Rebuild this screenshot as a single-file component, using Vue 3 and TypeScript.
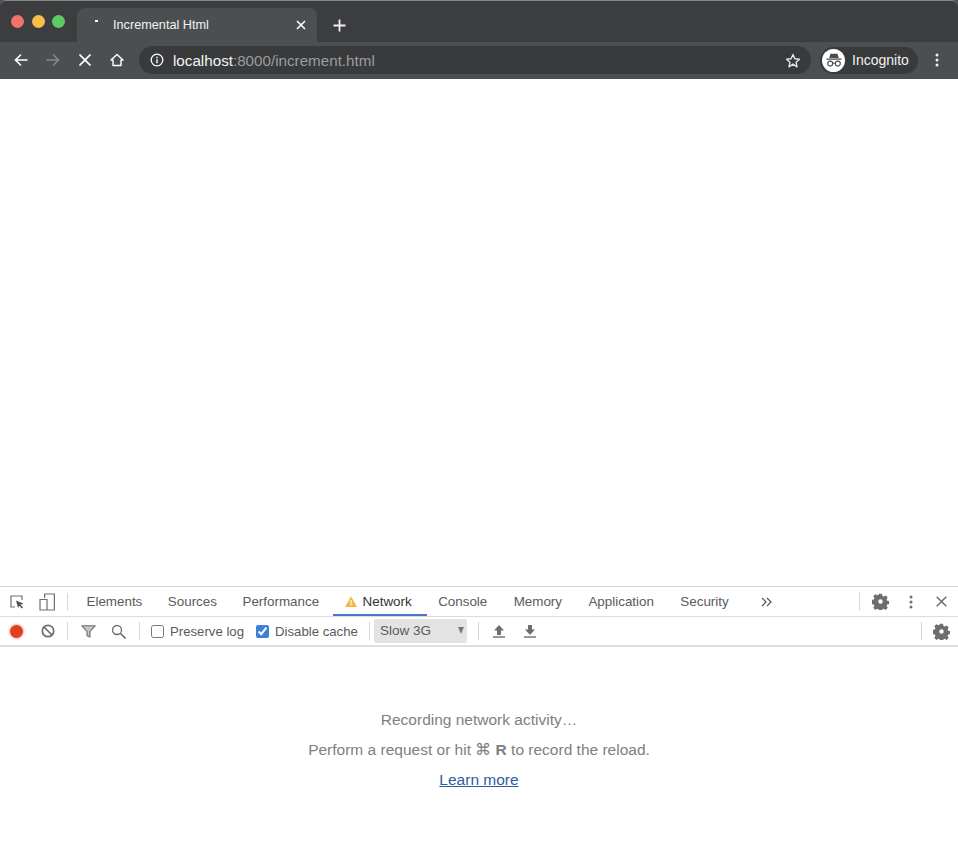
<script setup lang="ts">
const panels: string[] = ['Elements', 'Sources', 'Performance', 'Network', 'Console', 'Memory', 'Application', 'Security']
const gear = 'M6.600 .8h2.800l.4 2 1.300.6 1.700-1.100 2 2-1.100 1.700.6 1.300 2 .4v2.800l-2 .4-.6 1.300 1.100 1.700-2 2-1.700-1.100-1.300.6-.4 2H6.600l-.4-2-1.300-.6-1.700 1.100-2-2 1.100-1.700-.6-1.300-2-.4V6.500l2-.4.6-1.300-1.100-1.700 2-2 1.700 1.100 1.300-.6zM8 5.800a2.100 2.100 0 1 0 0 4.200 2.100 2.100 0 0 0 0-4.200z'
</script>

<template>
  <div class="window">
    <header class="chrome">
      <div class="tabstrip">
        <div class="lights">
          <span class="light red"></span>
          <span class="light yellow"></span>
          <span class="light green"></span>
        </div>
        <div class="tab">
          <span class="spinner"></span>
          <span class="tab-title">Incremental Html</span>
          <svg class="tab-close" width="10" height="10" viewBox="0 0 10 10"><path d="M1 1l8 8M9 1l-8 8" stroke="#fff" stroke-width="1.600" /></svg>
        </div>
        <svg class="new-tab" width="13" height="13" viewBox="0 0 13 13"><path d="M6.500 .5v12M.5 6.500h12" stroke="#f1f1f1" stroke-width="1.800" /></svg>
      </div>
      <div class="toolbar">
        <svg class="nav back" width="14" height="14" viewBox="0 0 14 14"><path d="M13.500 7H1.500M7 1.500L1.500 7 7 12.500" fill="none" stroke="#fff" stroke-width="1.600" /></svg>
        <svg class="nav forward" width="14" height="14" viewBox="0 0 14 14"><path d="M.5 7h12M7 1.500L12.500 7 7 12.500" fill="none" stroke="#85888b" stroke-width="1.600" /></svg>
        <svg class="nav stop" width="12" height="12" viewBox="0 0 12 12"><path d="M.5.5l11 11M11.500.5l-11 11" stroke="#fff" stroke-width="1.700" /></svg>
        <svg class="nav home" width="14" height="14" viewBox="0 0 14 14"><path d="M1 7l6-5.500L13 7h-2v5.500H3V7z" fill="none" stroke="#fff" stroke-width="1.400" stroke-linejoin="round" /></svg>
        <div class="omnibox">
          <svg class="info" width="14" height="14" viewBox="0 0 14 14"><circle cx="7" cy="7" r="5.800" fill="none" stroke="#fff" stroke-width="1.300" /><path d="M7 6.200v4M7 3.800v1.400" stroke="#fff" stroke-width="1.400" /></svg>
          <span class="url"><span class="host">localhost</span>:8000/increment.html</span>
          <svg class="star" width="16" height="15" viewBox="0 0 16 15"><path d="M8 1.500l1.900 4.200 4.600.5-3.400 3.100.9 4.500L8 11.100l-4 2.700.9-4.500-3.400-3.100 4.600-.5z" fill="none" stroke="#e4e5e6" stroke-width="1.400" stroke-linejoin="round" /></svg>
        </div>
        <div class="profile">
          <span class="avatar">
            <svg width="18" height="14" viewBox="0 0 18 14"><path d="M5.500 .8h7L13.800 5H4.200zM1.500 5.500h15v1.200h-15z" fill="#4a4c4f" /><circle cx="5.200" cy="10.600" r="2.500" fill="none" stroke="#4a4c4f" stroke-width="1.100" /><circle cx="12.800" cy="10.600" r="2.500" fill="none" stroke="#4a4c4f" stroke-width="1.100" /><path d="M7.700 10.200h2.600" stroke="#4a4c4f" stroke-width="1" /></svg>
          </span>
          <span class="profile-name">Incognito</span>
        </div>
        <svg class="menu" width="4" height="14" viewBox="0 0 4 14"><circle cx="2" cy="2" r="1.500" fill="#f1f1f1" /><circle cx="2" cy="7" r="1.500" fill="#f1f1f1" /><circle cx="2" cy="12" r="1.500" fill="#f1f1f1" /></svg>
      </div>
    </header>

    <main class="page"></main>

    <section class="devtools">
      <div class="dt-tabs">
        <svg class="dt-inspect" width="16" height="16" viewBox="0 0 16 16"><path d="M6 13H2V2h11v4" fill="none" stroke="#6e6e6e" stroke-width="1.200" /><path d="M7 6.500l7.500 3-3 1.200 2.500 2.800-1.200 1-2.400-2.800L9 14z" fill="#555" /></svg>
        <svg class="dt-device" width="16" height="18" viewBox="0 0 16 18"><path d="M5.600 5V1h9.800v16H1V6.500h7V17" fill="none" stroke="#6e6e6e" stroke-width="1.200" /></svg>
        <span class="dt-sep first"></span>
        <div class="panel-tabs">
          <span v-for="p in panels" :key="p" class="panel-tab" :class="{ active: p === 'Network' }"><svg v-if="p === 'Network'" class="warn" width="12" height="11" viewBox="0 0 12 11"><path d="M6 .3L12 11H0z" fill="#f0bb45" /><path d="M6 4v3.500M6 8.300v1.300" stroke="#fff" stroke-width="1.200" /></svg>{{ p }}</span>
          <svg class="more" width="11" height="10" viewBox="0 0 11 10"><path d="M1 1l4 4-4 4M6 1l4 4-4 4" fill="none" stroke="#555" stroke-width="1.200" /></svg>
        </div>
        <span class="dt-sep tabs-end"></span>
        <svg class="dt-gear" width="17" height="17" viewBox="0 0 16 16"><path :d="gear" fill="#6e6e6e" fill-rule="evenodd" /></svg>
        <svg class="dt-kebab" width="4" height="14" viewBox="0 0 4 14"><circle cx="2" cy="2" r="1.500" fill="#6e6e6e" /><circle cx="2" cy="7" r="1.500" fill="#6e6e6e" /><circle cx="2" cy="12" r="1.500" fill="#6e6e6e" /></svg>
        <svg class="dt-close" width="11" height="11" viewBox="0 0 11 11"><path d="M.7.7l9.600 9.600M10.300.7L.7 10.300" stroke="#6e6e6e" stroke-width="1.500" /></svg>
      </div>

      <div class="dt-controls">
        <span class="record"></span>
        <svg class="clear" width="14" height="14" viewBox="0 0 14 14"><circle cx="7" cy="7" r="5.700" fill="none" stroke="#6e6e6e" stroke-width="1.700" /><path d="M3 3l8 8" stroke="#6e6e6e" stroke-width="1.700" /></svg>
        <span class="dt-sep s1"></span>
        <svg class="filter" width="15" height="13" viewBox="0 0 15 13"><path d="M.8 .8h13.400L9 6.500V12l-3-1.200V6.500z" fill="#c4c4c4" stroke="#6e6e6e" stroke-width="1.100" stroke-linejoin="round" /></svg>
        <svg class="search" width="15" height="15" viewBox="0 0 15 15"><circle cx="6" cy="6" r="4.500" fill="none" stroke="#6e6e6e" stroke-width="1.300" /><path d="M9.500 9.500l5 5" stroke="#6e6e6e" stroke-width="1.700" /></svg>
        <span class="dt-sep s2"></span>
        <label class="check preserve"><input type="checkbox" />Preserve log</label>
        <label class="check disable"><input type="checkbox" checked />Disable cache</label>
        <span class="dt-sep s3"></span>
        <span class="throttle">Slow 3G<i class="caret"></i></span>
        <span class="dt-sep s4"></span>
        <svg class="upload" width="12" height="13" viewBox="0 0 12 13"><path d="M6 0l5 5.500H8V10H4V5.500H1z" fill="#6e6e6e" /><path d="M0 12h12" stroke="#6e6e6e" stroke-width="1.400" /></svg>
        <svg class="download" width="12" height="13" viewBox="0 0 12 13"><path d="M6 10L1 4.500h3V0h4v4.500h3z" fill="#6e6e6e" /><path d="M0 12h12" stroke="#6e6e6e" stroke-width="1.400" /></svg>
        <span class="dt-sep s5"></span>
        <svg class="dt-gear2" width="17" height="17" viewBox="0 0 16 16"><path :d="gear" fill="#6e6e6e" fill-rule="evenodd" /></svg>
      </div>

      <div class="empty">
        <p>Recording network activity…</p>
        <p>Perform a request or hit ⌘ <b>R</b> to record the reload.</p>
        <a class="learn" href="#" @click.prevent>Learn more</a>
      </div>
    </section>
  </div>
</template>

<style>
html, body { margin: 0; background: #fff; }
</style>

<style scoped>
.window {
  width: 958px;
  height: 850px;
  display: flex;
  flex-direction: column;
  overflow: hidden;
  font-family: "Liberation Sans", Arial, sans-serif;
}
.chrome { flex: none; background: #4c4f52; }
.tabstrip {
  height: 41px;
  border-top: 1px solid #85888b;
  background: #3b3d3f;
  border-radius: 6px 6px 0 0;
  display: flex;
  align-items: flex-end;
  box-sizing: content-box;
}
.lights { display: flex; gap: 7.500px; margin: 0 13px 14px 11px; }
.light { width: 13px; height: 13px; border-radius: 50%; }
.red { background: #f2736b; }
.yellow { background: #f9bd4a; }
.green { background: #5ccb61; }
.tab {
  width: 240px;
  height: 34px;
  margin-left: -1px;
  background: #4c4f52;
  border-radius: 8px 8px 0 0;
  display: flex;
  align-items: center;
  color: #f2f2f2;
  font-size: 12.700px;
}
.spinner { width: 3px; height: 2px; background: #fff; margin: -9px 0 0 18px; }
.tab-title { margin-left: 15px; flex: 1; }
.tab-close { margin-right: 11px; }
.new-tab { margin: 0 0 10px 15.500px; }
.toolbar { height: 37px; box-sizing: border-box; padding-bottom: 1px; display: flex; align-items: center; }
.nav { flex: none; }
.back { margin-left: 14px; }
.forward { margin-left: 18px; }
.stop { margin-left: 19px; }
.home { margin-left: 19px; }
.omnibox {
  width: 672px;
  height: 28px;
  margin-left: 15px;
  border-radius: 14px;
  background: #383a3c;
  display: flex;
  align-items: center;
}
.info { margin-left: 11px; }
.url { margin-left: 9px; flex: 1; font-size: 15.200px; color: #9b9d9f; }
.host { color: #f4f4f4; }
.star { margin-right: 10px; }
.profile {
  width: 98px;
  height: 27px;
  margin-left: 9px;
  border-radius: 14px;
  background: #383a3c;
  display: flex;
  align-items: center;
  color: #f2f2f2;
  font-size: 14px;
}
.avatar {
  width: 23px;
  height: 23px;
  margin: 0 7px 0 2px;
  border-radius: 50%;
  background: #fff;
  display: flex;
  align-items: center;
  justify-content: center;
}
.menu { margin-left: 17px; }
.page { flex: none; height: 507px; background: #fff; }
.devtools { flex: 1; display: flex; flex-direction: column; background: #fff; }
.dt-tabs {
  height: 29px;
  border-top: 1px solid #d3d3d3;
  border-bottom: 1px solid #dcdcdc;
  display: flex;
  align-items: center;
}
.dt-sep { flex: none; width: 1px; height: 18px; background: #d8d8d8; }
.dt-inspect { margin-left: 9px; }
.dt-device { margin-left: 14px; }
.dt-sep.first { margin-left: 12px; }
.panel-tabs {
  width: 791px;
  height: 100%;
  display: flex;
  align-items: center;
  flex: none;
  padding-left: 18.500px;
  box-sizing: border-box;
  gap: 25.500px;
  color: #5a5a5a;
  font-size: 13.400px;
}
.panel-tab { position: relative; height: 100%; display: flex; align-items: center; }
.panel-tab.active { color: #333; }
.panel-tab.active ~ .panel-tab { margin-left: 0.900px; }
.panel-tab.active::after {
  content: "";
  position: absolute;
  left: -12px;
  right: -15px;
  bottom: 0;
  height: 2px;
  background: #4a78c9;
}
.warn { margin-right: 6px; }
.more { margin-left: 6.900px; }
.dt-sep.tabs-end { height: 19px; }
.dt-gear { margin-left: 12px; }
.dt-kebab { margin-left: 20px; }
.dt-close { margin-left: 23px; }
.dt-controls {
  height: 28px;
  border-bottom: 2px solid #dedede;
  display: flex;
  align-items: center;
}
.record {
  flex: none;
  width: 13px;
  height: 13px;
  margin-left: 10px;
  border-radius: 50%;
  background: #e0401f;
  box-shadow: 0 0 2px 1px rgba(224, 64, 31, 0.35);
}
.clear { margin-left: 18px; }
.s1 { margin-left: 12px; }
.filter { margin-left: 13px; }
.search { margin-left: 15px; }
.s2 { margin-left: 13px; }
.check { display: flex; align-items: center; color: #5a5a5a; font-size: 13.200px; white-space: nowrap; }
.check input { width: 13px; height: 13px; margin: 0 6px 0 0; accent-color: #3d7fd9; }
.preserve { margin-left: 11px; }
.disable { margin-left: 12px; }
.s3 { margin-left: 11px; }
.throttle {
  position: relative;
  width: 93px;
  height: 24px;
  margin-left: 4px;
  padding-left: 6px;
  box-sizing: border-box;
  background: #e3e3e3;
  border-radius: 2px;
  color: #5a5a5a;
  font-size: 13.500px;
  line-height: 24px;
}
.caret {
  position: absolute;
  right: 3px;
  top: 8px;
  border-left: 3.500px solid transparent;
  border-right: 3.500px solid transparent;
  border-top: 7px solid #777;
}
.s4 { margin-left: 11px; }
.upload { margin-left: 14px; }
.download { margin-left: 19px; }
.s5 { margin-left: 385px; }
.dt-gear2 { margin-left: 11px; }
.empty {
  margin-top: 64px;
  display: flex;
  flex-direction: column;
  align-items: center;
  gap: 13px;
  color: #808080;
  font-size: 15.500px;
  line-height: 17px;
}
.empty p { margin: 0; }
.learn { color: #2f5c9e; }
</style>
